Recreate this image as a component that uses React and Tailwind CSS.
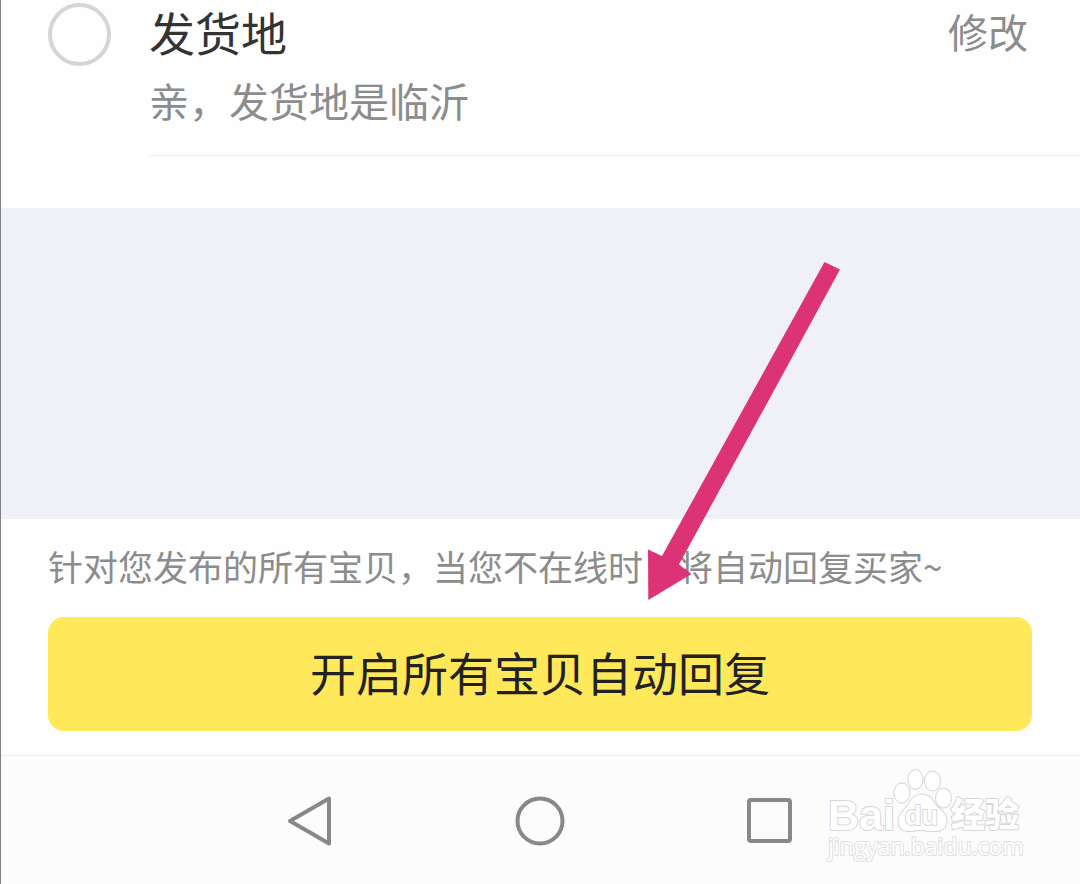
import { useState } from "react";

function ReplyItem({ title, content }) {
    const [checked, setChecked] = useState(false);

    return (
        <div className="flex gap-[38px] pl-[47px]">
            <input
                id="reply-item"
                type="radio"
                checked={checked}
                onChange={() => setChecked(true)}
                className="mt-[3px] size-[63px] shrink-0 appearance-none rounded-full border-[4px] border-[#d4d5d4] checked:bg-[#ffe85a]"
            />
            <div className="grow border-b border-[#ececec] pb-4">
                <div className="flex items-center justify-between pr-[52px]">
                    <label htmlFor="reply-item" className="text-[46px] leading-[62px] text-[#333]">
                        {title}
                    </label>
                    <button type="button" className="text-[40px] leading-[62px] text-[#8c8c8c]">
                        修改
                    </button>
                </div>
                <p className="text-[40px] leading-[77px] text-[#8c8c8c]">{content}</p>
            </div>
        </div>
    );
}

function Arrow() {
    return (
        <svg
            className="pointer-events-none absolute top-[54px] left-[60%] h-[339px] w-[194px]"
            viewBox="648 262 194 339"
            fill="#dc3276"
            aria-hidden="true"
        >
            <path d="M824.5 262 L840 269.5 L679 564.5 L691.5 574 L648.3 600 L648 549.5 L662 556 Z" />
        </svg>
    );
}

function Watermark() {
    return (
        <svg
            className="pointer-events-none absolute top-[12px] right-[54px] h-[98px] w-[202px] [paint-order:stroke]"
            viewBox="824 767 202 98"
            fill="#fff"
            stroke="#d6d6d6"
            strokeWidth="2"
            strokeLinejoin="round"
            aria-hidden="true"
        >
            <text x="828" y="829" fontSize="43" fontWeight="700" fontFamily="'Liberation Sans', sans-serif">
                Bai
            </text>
            <text x="951" y="826" fontSize="34" fontWeight="900" fontFamily="'Noto Sans CJK SC', sans-serif">
                经验
            </text>
            <ellipse cx="902" cy="792" rx="7.5" ry="9.5" />
            <ellipse cx="915.5" cy="778.5" rx="7" ry="9.5" />
            <ellipse cx="932.5" cy="780" rx="7.5" ry="9.5" />
            <ellipse cx="943.5" cy="797" rx="7.5" ry="9.5" />
            <path d="M922 793.5 C915 793.5 911.5 798 909 803 C906 808 898.5 812 898.5 820 C898.5 827 903 830 909 830 C914 830 917 828.5 922 829 C927 829.5 931 830.5 936 830 C943 829.5 946.5 826 946.5 819 C946.5 811 938 808 935 803 C932 798 929 793.5 922 793.5 Z" />
            <text x="905" y="824" fontSize="27" fontWeight="700" fontFamily="'Liberation Sans', sans-serif">
                du
            </text>
            <text x="828" y="854" fontSize="23" stroke="#e0e0e0" fontFamily="'Open Sans', sans-serif">
                jingyan.baidu.com
            </text>
        </svg>
    );
}

function NavBar() {
    return (
        <nav className="relative flex grow items-center justify-center gap-[178px] border-t border-[#ececec] bg-[#fcfcfc] pt-0.5 pr-0.5">
            <button type="button" aria-label="返回">
                <svg className="size-[52px]" viewBox="0 0 52 52" fill="none" stroke="#888" strokeWidth="4" strokeLinejoin="round">
                    <path d="M6 26 L45 3.5 V48.5 Z" />
                </svg>
            </button>
            <button type="button" aria-label="主页">
                <svg className="size-[52px]" viewBox="0 0 52 52" fill="none" stroke="#888" strokeWidth="4">
                    <circle cx="26" cy="26" r="22.5" />
                </svg>
            </button>
            <button type="button" aria-label="最近任务">
                <svg className="size-[52px]" viewBox="0 0 52 52" fill="none" stroke="#888" strokeWidth="4">
                    <rect x="5" y="5" width="41" height="41" rx="2" />
                </svg>
            </button>
            <Watermark />
        </nav>
    );
}

export default function App() {
    return (
        <div className="flex min-h-screen flex-col border-l border-[#808080] bg-[#fefefe] font-['Noto_Sans_CJK_SC',sans-serif]">
            <main>
                <ReplyItem title="发货地" content="亲，发货地是临沂" />
                <div className="relative z-10 mt-[52px] h-[311px] bg-[#f0f1f6]">
                    <Arrow />
                </div>
                <div className="pt-6 pr-12 pb-6 pl-[47px]">
                    <p className="text-[35px] leading-[46px] text-[#8c8c8c]">
                        针对您发布的所有宝贝，当您不在线时，将自动回复买家~
                    </p>
                    <button
                        type="button"
                        className="mt-7 h-[114px] w-full rounded-2xl bg-[#ffe85a] pb-1.5 text-[46px] text-[#222]"
                    >
                        开启所有宝贝自动回复
                    </button>
                </div>
            </main>
            <NavBar />
        </div>
    );
}
